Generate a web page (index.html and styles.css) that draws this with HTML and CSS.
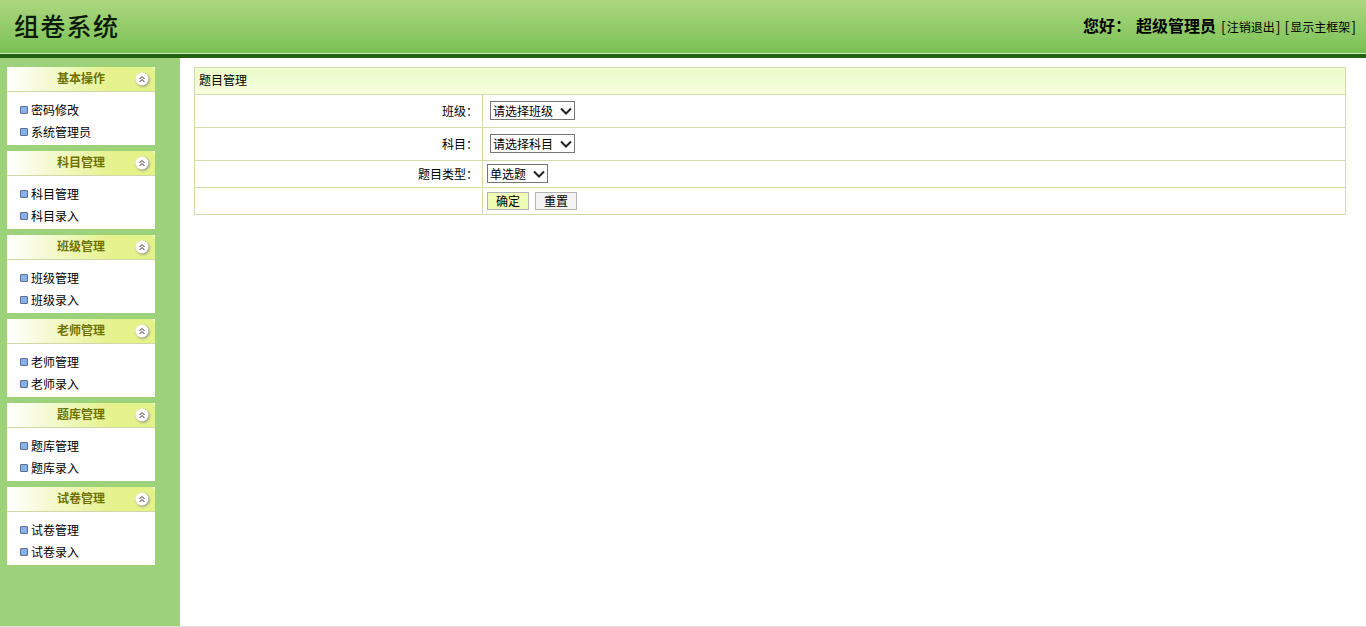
FILE: index.html
```html
<!DOCTYPE html>
<html lang="zh">
<head>
<meta charset="utf-8">
<title>组卷系统</title>
<link rel="stylesheet" href="styles.css">
</head>
<body>
<header class="top">
  <h1 class="logo">组卷系统</h1>
  <div class="user">
    <b class="hello">您好：</b><b class="name">超级管理员</b>
    <span class="link">[<a>注销退出</a>]</span>
    <span class="link">[<a>显示主框架</a>]</span>
  </div>
</header>
<div class="layout">
  <aside class="side">
    <section class="panel">
      <div class="panel-head"><span>基本操作</span><svg class="toggle" viewBox="0 0 14 14"><circle cx="7" cy="7" r="6.5" fill="#fff"/><path d="M4.5 7 7 4.5 9.5 7M4.5 10 7 7.5 9.5 10" fill="none" stroke="#333" stroke-width="1"/></svg></div>
      <ul class="menu"><li>密码修改</li><li>系统管理员</li></ul>
    </section>
    <section class="panel">
      <div class="panel-head"><span>科目管理</span><svg class="toggle" viewBox="0 0 14 14"><circle cx="7" cy="7" r="6.5" fill="#fff"/><path d="M4.5 7 7 4.5 9.5 7M4.5 10 7 7.5 9.5 10" fill="none" stroke="#333" stroke-width="1"/></svg></div>
      <ul class="menu"><li>科目管理</li><li>科目录入</li></ul>
    </section>
    <section class="panel">
      <div class="panel-head"><span>班级管理</span><svg class="toggle" viewBox="0 0 14 14"><circle cx="7" cy="7" r="6.5" fill="#fff"/><path d="M4.5 7 7 4.5 9.5 7M4.5 10 7 7.5 9.5 10" fill="none" stroke="#333" stroke-width="1"/></svg></div>
      <ul class="menu"><li>班级管理</li><li>班级录入</li></ul>
    </section>
    <section class="panel">
      <div class="panel-head"><span>老师管理</span><svg class="toggle" viewBox="0 0 14 14"><circle cx="7" cy="7" r="6.5" fill="#fff"/><path d="M4.5 7 7 4.5 9.5 7M4.5 10 7 7.5 9.5 10" fill="none" stroke="#333" stroke-width="1"/></svg></div>
      <ul class="menu"><li>老师管理</li><li>老师录入</li></ul>
    </section>
    <section class="panel">
      <div class="panel-head"><span>题库管理</span><svg class="toggle" viewBox="0 0 14 14"><circle cx="7" cy="7" r="6.5" fill="#fff"/><path d="M4.5 7 7 4.5 9.5 7M4.5 10 7 7.5 9.5 10" fill="none" stroke="#333" stroke-width="1"/></svg></div>
      <ul class="menu"><li>题库管理</li><li>题库录入</li></ul>
    </section>
    <section class="panel">
      <div class="panel-head"><span>试卷管理</span><svg class="toggle" viewBox="0 0 14 14"><circle cx="7" cy="7" r="6.5" fill="#fff"/><path d="M4.5 7 7 4.5 9.5 7M4.5 10 7 7.5 9.5 10" fill="none" stroke="#333" stroke-width="1"/></svg></div>
      <ul class="menu"><li>试卷管理</li><li>试卷录入</li></ul>
    </section>
  </aside>
  <main class="content">
    <table class="form">
      <colgroup><col class="col-lab"><col></colgroup>
      <tr class="r-head"><th colspan="2">题目管理</th></tr>
      <tr class="r-tall"><td class="lab">班级：</td><td class="val indent"><select class="sel sel-wide"><option>请选择班级</option></select></td></tr>
      <tr class="r-tall"><td class="lab">科目：</td><td class="val indent"><select class="sel sel-wide"><option>请选择科目</option></select></td></tr>
      <tr class="r-norm"><td class="lab">题目类型：</td><td class="val"><select class="sel sel-short"><option>单选题</option></select></td></tr>
      <tr class="r-norm"><td class="lab"></td><td class="val btns"><button class="btn ok">确定</button><button class="btn">重置</button></td></tr>
    </table>
  </main>
</div>
</body>
</html>
```
FILE: styles.css
```css
* { box-sizing: border-box; }
html, body { margin: 0; height: 100%; }
body {
  height: 627px;
  overflow: hidden;
  background: #fff;
  font: 12px "Noto Sans CJK SC", "Liberation Sans", sans-serif;
  color: #000;
}
.top {
  height: 58px;
  display: flex;
  justify-content: space-between;
  align-items: center;
  padding: 0 10px 5px 14px;
  background: linear-gradient(#add77f, #78c054);
  border-bottom: 4px solid #24610f;
  box-shadow: inset 0 -1px 0 #d5ecb8;
}
.logo {
  margin: 0;
  font-size: 25px;
  line-height: 30px;
  font-weight: 500;
  letter-spacing: 1.3px;
  color: #0c1a08;
}
.user { display: flex; align-items: baseline; font-size: 13px; white-space: nowrap; }
.hello, .name { font-size: 16px; font-weight: 700; }
.hello { margin-right: 5px; }
.name { margin-right: 5px; }
.link { font-size: 14px; margin-right: 4px; }
.link:last-child { margin-right: 0; }
.link a { font-size: 12px; padding: 0 1px; }
.layout { display: flex; height: 569px; border-bottom: 1px solid #dcdcdc; }
.side {
  width: 180px;
  height: 568px;
  flex: none;
  background: #9dd27a;
  padding: 9px 25px 0 7px;
}
.panel { width: 148px; margin-bottom: 6px; background: #fff; }
.panel-head {
  height: 25px;
  position: relative;
  text-align: center;
  line-height: 21px;
  font-size: 12px;
  font-weight: 700;
  color: #6e7200;
  border-bottom: 1px solid #cfd9a8;
  border-radius: 4px 4px 0 0;
  background: linear-gradient(90deg, #fff, #e5f28d 70%, #e3f288);
}
.toggle {
  position: absolute;
  right: 6px;
  top: 5px;
  width: 14px;
  height: 14px;
  filter: drop-shadow(1px 1px 1px #8a8a8a);
}
.menu { margin: 0; padding: 7px 0 2px; list-style: none; height: 53px; }
.menu li {
  height: 22px;
  line-height: 22px;
  padding-left: 24px;
  position: relative;
  font-size: 12px;
}
.menu li::before {
  content: "";
  position: absolute;
  left: 13px;
  top: 7px;
  width: 6px;
  height: 6px;
  border: 1px solid #5d6f85;
  border-radius: 1px;
  background: #86b0ee;
}
.content { flex: 1; padding: 9px 20px 0 14px; }
.form {
  width: 1152px;
  border-collapse: collapse;
  table-layout: fixed;
  font-size: 12px;
}
.col-lab { width: 288px; }
.form th, .form td { border: 1px solid #d2dcaa; padding: 0 4px 2px; }
.form th {
  height: 27px;
  padding-bottom: 3px;
  text-align: left;
  font-weight: 400;
  background: linear-gradient(#eafbc8, #f8fedd);
}
.r-tall td { height: 33px; }
.r-norm td { height: 27px; }
.form .lab { text-align: right; padding-right: 4px; }
.form .indent { padding-left: 7px; }
.form .val { padding-bottom: 1px; }
.form .btns { padding-bottom: 2px; }
.sel {
  height: 19px;
  font: 12px "Noto Sans CJK SC", sans-serif;
  appearance: none;
  background: #fff url("data:image/svg+xml,%3Csvg xmlns='http://www.w3.org/2000/svg' width='12' height='8'%3E%3Cpath d='M1 1.5 6 6.5 11 1.5' fill='none' stroke='%23222' stroke-width='2'/%3E%3C/svg%3E") no-repeat right 2px center;
  border: 1px solid #767676;
  border-radius: 0;
  padding: 0 0 0 2px;
  display: block;
}
.sel-wide { width: 85px; }
.sel-short { width: 61px; }
.btn {
  width: 42px;
  height: 18px;
  padding: 0 0 2px;
  margin-right: 6px;
  font: 12px "Noto Sans CJK SC", sans-serif;
  line-height: 15px;
  background: #f3f3f3;
  border: 1px solid #b4b4b4;
  vertical-align: middle;
}
.ok { background: #eefcb4; }
```
